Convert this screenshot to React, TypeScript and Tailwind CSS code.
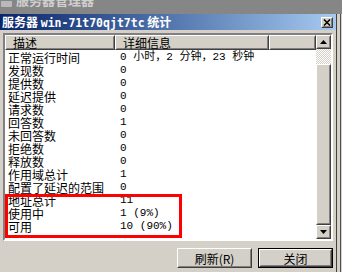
const rows = [
  ["正常运行时间", "0 小时，2 分钟，23 秒钟"],
  ["发现数", "0"],
  ["提供数", "0"],
  ["延迟提供", "0"],
  ["请求数", "0"],
  ["回答数", "1"],
  ["未回答数", "0"],
  ["拒绝数", "0"],
  ["释放数", "0"],
  ["作用域总计", "1"],
  ["配置了延迟的范围", "0"],
  ["地址总计", "11"],
  ["使用中", "1 (9%)"],
  ["可用", "10 (90%)"],
];

const cjk = "font-['Noto_Sans_CJK_SC',sans-serif]";

function Raised({ className = "", children }: { className?: string; children?: React.ReactNode }) {
  return (
    <div className={`border border-t-white border-l-white border-r-[#404040] border-b-[#404040] ${className}`}>
      <div className="flex h-full w-full items-center justify-center border border-transparent border-r-[#808080] border-b-[#808080] bg-[#d4d0c8]">
        {children}
      </div>
    </div>
  );
}

export default function App() {
  return (
    <div className={`flex h-[272px] w-[342px] flex-col overflow-hidden bg-[#868686] ${cjk}`}>
      {/* window behind, only the lower half of its title shows */}
      <div className="flex h-[14px] items-start gap-[4px] overflow-hidden pl-[1px]">
        <div className="mt-[1px] h-[6px] w-[11px] rounded-b-[1px] bg-[#b9b9b9]" />
        <span className="mt-[-7px] whitespace-nowrap text-[13px] font-bold leading-[14px] text-[#cfcfcf]">服务器管理器</span>
      </div>

      <div className="flex flex-1">
        {/* dialog */}
        <div className="flex w-[337px] flex-col border-r border-r-[#404040] bg-[#d4d0c8]">
          <div className="flex h-[16px] items-center bg-gradient-to-r from-[#0a246a] to-[#a6caf0] pl-[2px] pr-[3px]">
            <span className="flex-1 whitespace-nowrap text-[12px] font-bold leading-[14px] text-white">
              服务器 <span className="font-['DejaVu_Sans_Mono',monospace] text-[11.5px]">win-71t70qjt7tc</span> 统计
            </span>
            <Raised className="h-[11px] w-[12px]">
              <svg width="8" height="7" viewBox="0 0 8 7">
                <path d="M1 0.5 L7 6.5 M7 0.5 L1 6.5" stroke="black" strokeWidth="1.5" />
              </svg>
            </Raised>
          </div>

          <div className="flex flex-1 flex-col pl-[3px] pr-[3px] pt-[3px]">
            {/* list box */}
            <div className="flex h-[208px] border-2 border-t-[#808080] border-l-[#808080] border-r-white border-b-white bg-white">
              <div className="flex flex-1 flex-col">
                <div className="flex h-[15px] text-[12px] leading-[13px] text-black">
                  <Raised className="w-[110px]">
                    <span className="w-full pl-[6px]">描述</span>
                  </Raised>
                  <Raised className="w-[154px]">
                    <span className="w-full pl-[6px]">详细信息</span>
                  </Raised>
                  <Raised className="flex-1" />
                </div>
                <div className="relative flex flex-col pt-[1px]">
                  {rows.map(([name, value]) => (
                    <div key={name} className="flex h-[13px] text-[12px] leading-[13px] text-black">
                      <span className="w-[110px] whitespace-nowrap pl-[3px]">{name}</span>
                      <span className="whitespace-pre pl-[5px] font-['Liberation_Mono','Noto_Sans_CJK_SC',monospace] text-[11px]">
                        {value}
                      </span>
                    </div>
                  ))}
                  <div className="absolute left-0 top-[144px] h-[44px] w-[177px] border-[3px] border-[#ff0000]" />
                </div>
              </div>

              {/* scrollbar */}
              <div className="flex w-[15px] flex-col">
                <Raised className="h-[14px] w-[15px]">
                  <svg width="7" height="4" viewBox="0 0 7 4">
                    <path d="M3.5 0 L7 4 L0 4 Z" fill="black" />
                  </svg>
                </Raised>
                <div className="h-[15px] bg-[repeating-conic-gradient(#ffffff_0_25%,#d4d0c8_0_50%)] bg-[length:2px_2px]" />
                <Raised className="flex-1" />
                <Raised className="h-[14px] w-[15px]">
                  <svg width="7" height="4" viewBox="0 0 7 4">
                    <path d="M0 0 L7 0 L3.5 4 Z" fill="black" />
                  </svg>
                </Raised>
              </div>
            </div>

            {/* buttons */}
            <div className="flex justify-end gap-[6px] pt-[7px]">
              <Raised className="h-[20px] w-[75px]">
                <span className="text-[12px] leading-[13px] text-black">刷新(R)</span>
              </Raised>
              <div className="border border-black">
                <Raised className="h-[18px] w-[73px]">
                  <span className="text-[12px] leading-[13px] text-black">关闭</span>
                </Raised>
              </div>
            </div>
          </div>
        </div>

        {/* window behind, right edge */}
        <div className="flex flex-1 bg-[#d4d0c8]">
          <div className="ml-[3px] w-[1px] bg-[#505050]" />
        </div>
      </div>
    </div>
  );
}
